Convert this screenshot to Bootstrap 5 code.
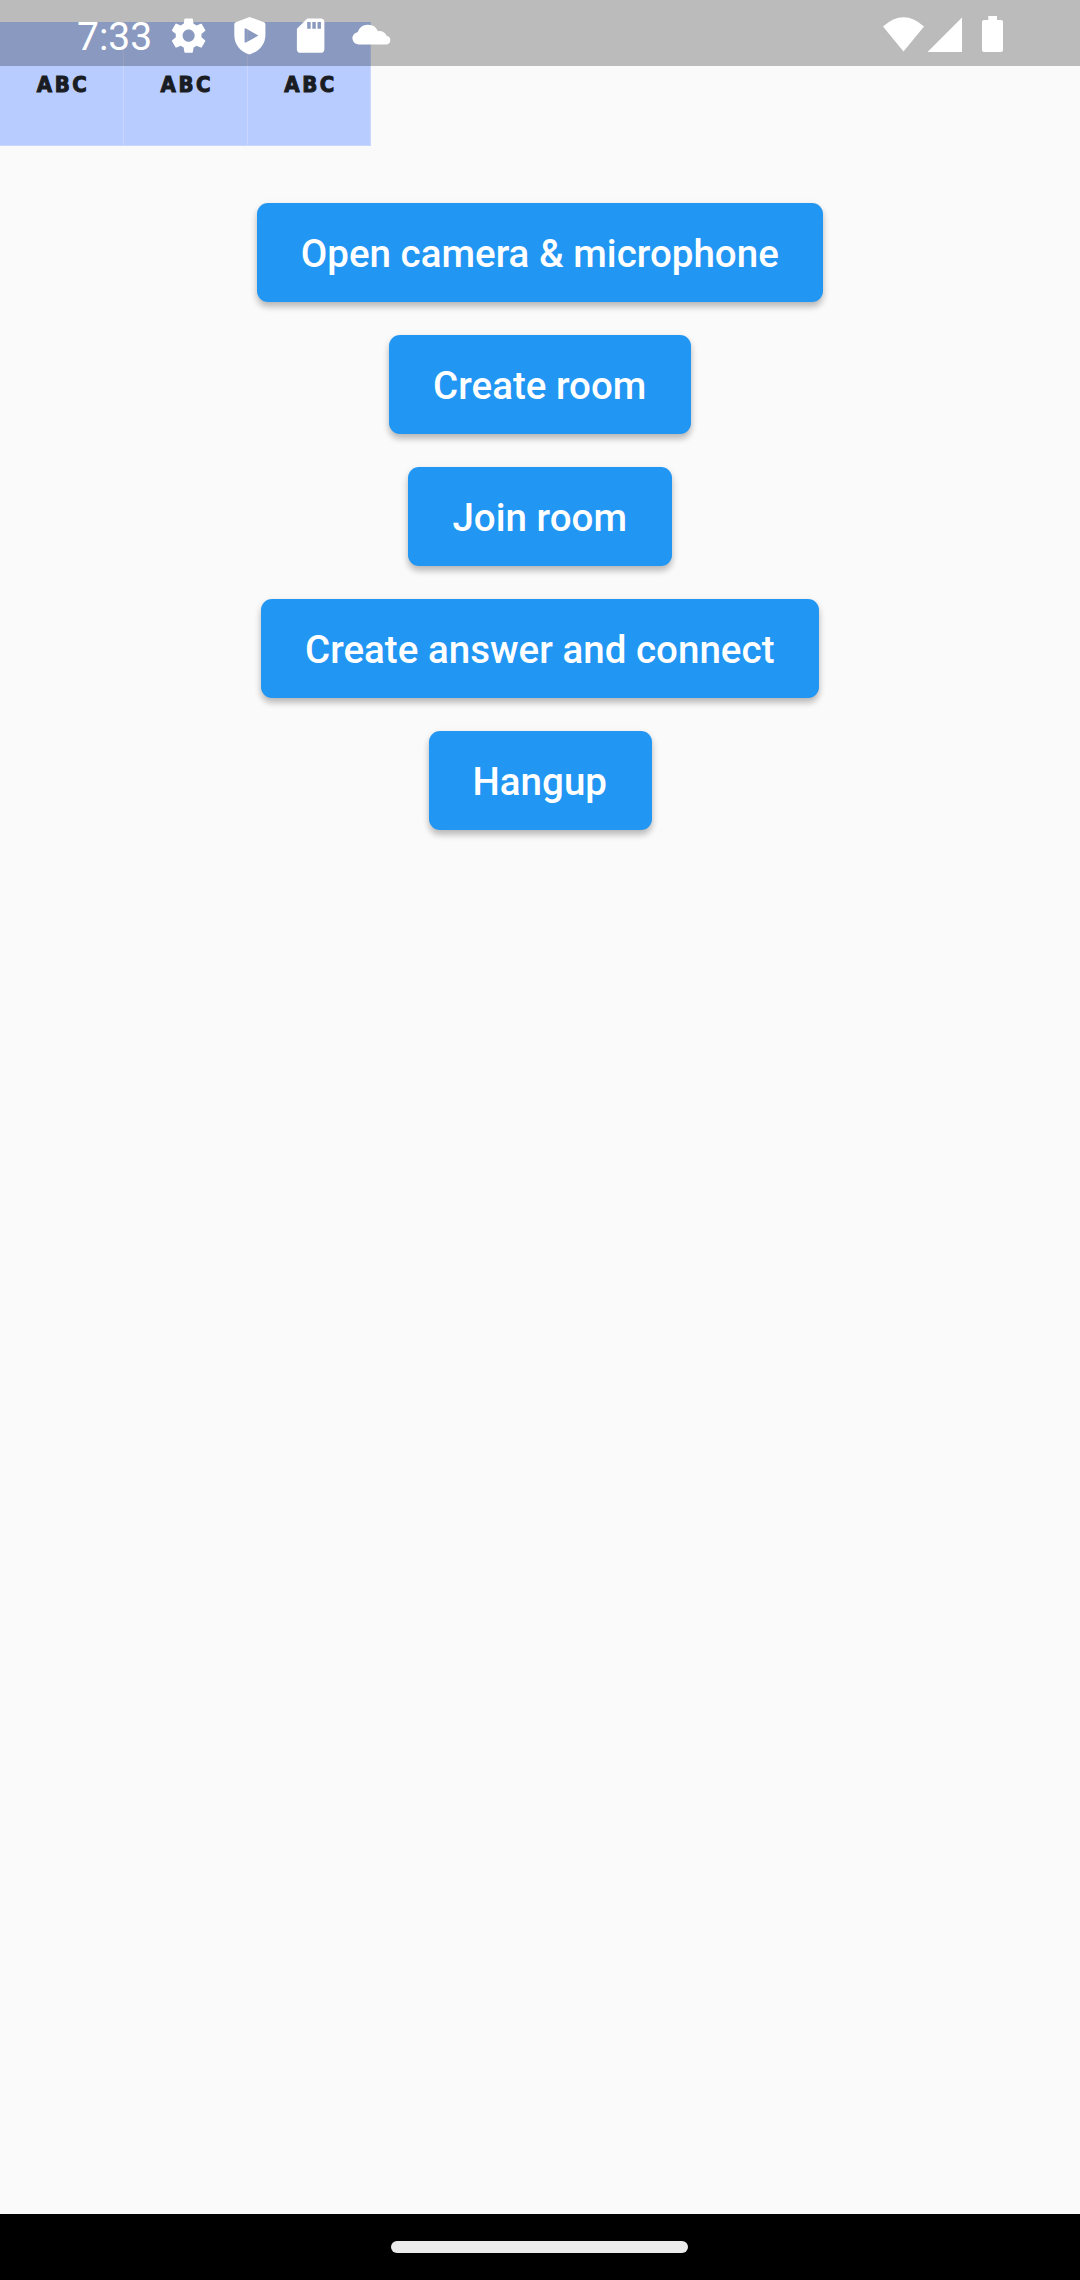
<!DOCTYPE html>
<html lang="en">
<head>
<meta charset="utf-8">
<meta name="viewport" content="width=device-width, initial-scale=1">
<title>Video call</title>
<link href="https://cdn.jsdelivr.net/npm/bootstrap@5.3.0/dist/css/bootstrap.min.css" rel="stylesheet">
<style>
  body { background: #fafafa; font-family: Roboto, "Liberation Sans", sans-serif; }
  .status-strip { height: 66px; background: rgba(0,0,0,.25); padding-left: 77px; padding-right: 76px; z-index: 10; }
  .clock { font-size: 39px; line-height: 66px; width: 90.5px; padding-top: 4px; }
  .status-icons { gap: 19.75px; padding-top: 14.6px; }
  .status-icons svg { width: 41.25px; height: 41.25px; }
  .signal-icons { padding-top: 14px; }
  .renderers { padding-top: 22px; }
  .tile { width: 123.75px; height: 123.75px; background: #b9ccff; box-shadow: inset -1px -1px 0 rgba(255,255,255,.22);
    color: #191c22; font: bold 22px/1 "DejaVu Sans Condensed", "DejaVu Sans", sans-serif; letter-spacing: 2.6px; padding-left: 2.5px; padding-top: 2px; -webkit-text-stroke: 1px #191c22; }
  .controls { padding-top: 57.5px; gap: 33px; }
  .btn-raised { --bs-btn-bg: #2196f3; --bs-btn-color: #fff; --bs-btn-border-width: 0; --bs-btn-hover-bg: #1e88e5; --bs-btn-hover-color: #fff;
    --bs-btn-font-size: 38.5px; --bs-btn-font-weight: 500; --bs-btn-border-radius: 11px;
    --bs-btn-line-height: 97px; padding: 2px 44.5px 0 44px; height: 99px; letter-spacing: .02px;
    box-shadow: 0 5px 6px rgba(0,0,0,.22), 0 2px 8px rgba(0,0,0,.07); }
  .gesture-bar { height: 66px; padding-right: 1px; }
  .gesture-pill { width: 297px; height: 11.5px; background: #ebebeb; }
</style>
</head>
<body>
<div class="d-flex flex-column vh-100 position-relative overflow-hidden">
  <header class="status-strip position-absolute top-0 start-0 w-100 d-flex justify-content-between text-white">
    <div class="d-flex">
      <span class="clock">7:33</span>
      <div class="status-icons d-flex align-items-start">
        <svg viewBox="0 0 24 24" fill="#fff"><path d="M19.430 12.980c.04-.32.07-.64.07-.98s-.03-.66-.07-.98l2.110-1.650c.19-.15.24-.42.12-.64l-2-3.460c-.12-.22-.39-.3-.61-.22l-2.490 1c-.52-.4-1.080-.73-1.690-.98l-.38-2.650C14.460 2.180 14.250 2 14 2h-4c-.25 0-.46.18-.49.42l-.38 2.650c-.61.25-1.170.59-1.690.98l-2.490-1c-.23-.09-.49 0-.61.22l-2 3.460c-.13.22-.07.49.12.64l2.110 1.650c-.04.32-.07.65-.07.98s.03.66.07.98l-2.110 1.650c-.19.15-.24.42-.12.64l2 3.460c.12.22.39.3.61.22l2.490-1c.52.4 1.080.73 1.690.98l.38 2.650c.03.24.24.42.49.42h4c.25 0 .46-.18.49-.42l.38-2.650c.61-.25 1.170-.59 1.690-.98l2.490 1c.23.09.49 0 .61-.22l2-3.460c.12-.22.07-.49-.12-.64l-2.110-1.650zM12 15.500c-1.930 0-3.500-1.570-3.500-3.500s1.570-3.500 3.500-3.500 3.500 1.570 3.500 3.500-1.570 3.500-3.500 3.500z"/></svg>
        <svg viewBox="0 0 41.25 41.25" fill="#fff" fill-rule="evenodd"><path d="M20.600 2 L35 7.200 Q36.400 7.800 36.400 9.200 V20 C36.400 29 30.500 36.500 20.600 39.500 C10.700 36.500 5.300 29 5.300 20 V9.200 Q5.300 7.800 6.700 7.200Z M15.600 13.600 V27.600 H17 L29.400 20.600 L17 13.600Z"/></svg>
        <svg viewBox="0 0 24 24" fill="#fff"><path d="M18 2h-8L4.020 8 4 20c0 1.100.9 2 2 2h12c1.100 0 2-.9 2-2V4c0-1.100-.9-2-2-2zm-6 6h-2V4h2v4zm3 0h-2V4h2v4zm3 0h-2V4h2v4z"/></svg>
        <svg viewBox="0 0 41.25 41.25" fill="#fff"><path d="M8 29.500 A6.200 6.200 0 0 1 6.600 17.200 A11 11 0 0 1 27 16.200 A7.800 7.800 0 0 1 35.900 21 A4.300 4.300 0 0 1 35.200 29.500Z"/></svg>
      </div>
    </div>
    <div class="signal-icons">
      <svg class="d-block" width="122" height="40" viewBox="882 14 122 40" fill="#fff"><path d="M883 26.500 Q903.500 8 924 26.500 L903.500 51.500Z M927.500 52 L962 17.500 V52Z M988.300 16 H997 V20 H1001 Q1003 20 1003 22 V50 Q1003 52 1001 52 H984 Q982 52 982 50 V22 Q982 20 984 20 H988.300Z"/></svg>
    </div>
  </header>

  <main class="flex-grow-1 d-flex flex-column">
    <section class="renderers d-flex">
      <div class="tile d-flex align-items-center justify-content-center">ABC</div>
      <div class="tile d-flex align-items-center justify-content-center">ABC</div>
      <div class="tile d-flex align-items-center justify-content-center">ABC</div>
    </section>
    <section class="controls d-flex flex-column align-items-center">
      <button type="button" class="btn btn-raised">Open camera &amp; microphone</button>
      <button type="button" class="btn btn-raised">Create room</button>
      <button type="button" class="btn btn-raised">Join room</button>
      <button type="button" class="btn btn-raised">Create answer and connect</button>
      <button type="button" class="btn btn-raised">Hangup</button>
    </section>
  </main>

  <footer class="gesture-bar bg-black d-flex align-items-center justify-content-center">
    <div class="gesture-pill rounded-pill"></div>
  </footer>
</div>
<script src="https://cdn.jsdelivr.net/npm/bootstrap@5.3.0/dist/js/bootstrap.bundle.min.js"></script>
</body>
</html>
